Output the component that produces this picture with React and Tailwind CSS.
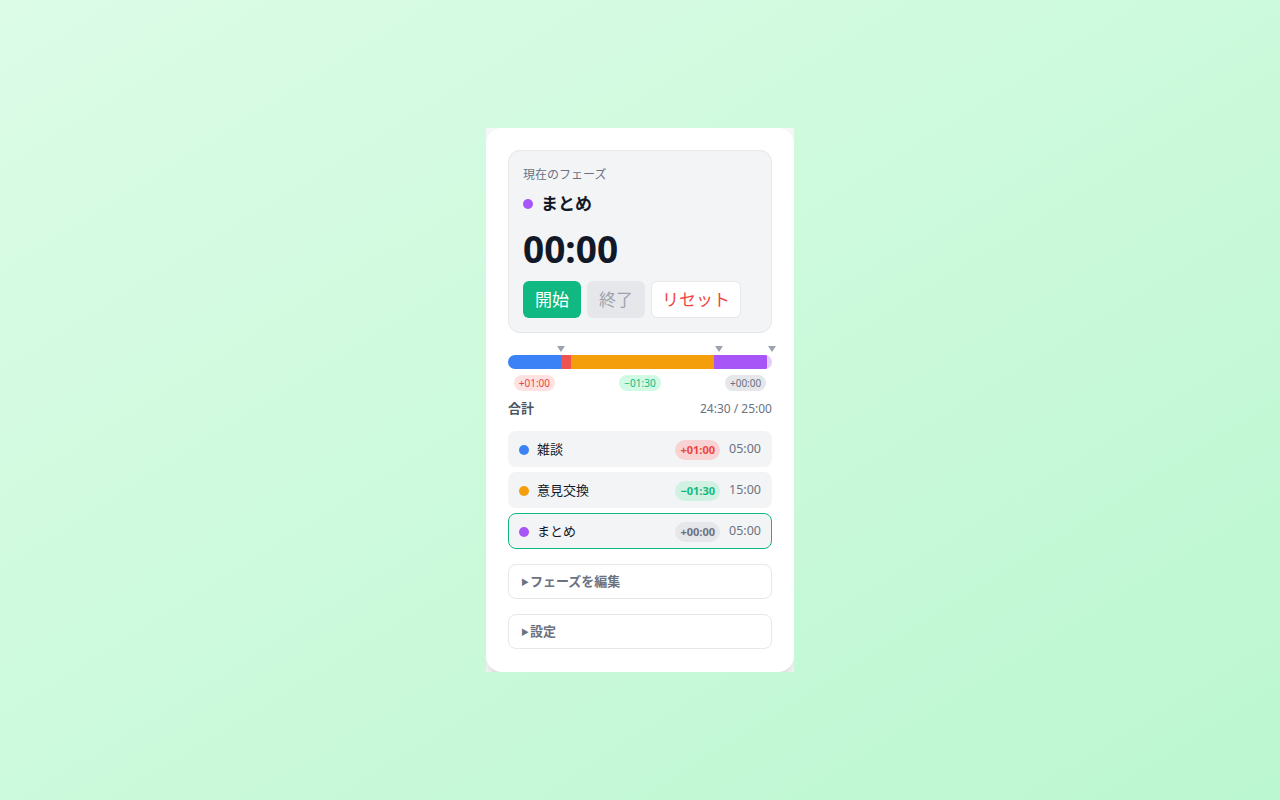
import React from 'react'

const font = { fontFamily: '"Noto Sans", "Noto Sans CJK JP", sans-serif' }

const phases = [
  { name: '雑談', dot: 'bg-[#3b82f6]', plan: 5, diff: '+01:00', tone: 'red', time: '05:00' },
  { name: '意見交換', dot: 'bg-[#f59e0b]', plan: 15, diff: '−01:30', tone: 'green', time: '15:00' },
  { name: 'まとめ', dot: 'bg-[#a855f7]', plan: 5, diff: '+00:00', tone: 'gray', time: '05:00', active: true },
]

const total = 25

// actual elapsed pieces on the bar, in minutes
const segments = [
  { m: 5, cls: 'bg-[#3b82f6]' },
  { m: 1, cls: 'bg-[#ef5350]' },
  { m: 13.5, cls: 'bg-[#f59e0b]' },
  { m: 5, cls: 'bg-[#a855f7]' },
  { m: 0.5, cls: 'bg-[#e2d0fb]' },
]

const smallPill = {
  red: 'bg-[#fee2e2] text-[#ef4444]',
  green: 'bg-[#d1fae5] text-[#10b981]',
  gray: 'bg-[#e5e7eb] text-[#6b7280]',
}

const rowPill = {
  red: 'bg-[#f9d3d3] text-[#ef4444]',
  green: 'bg-[#d1f2e3] text-[#10b981]',
  gray: 'bg-[#e5e7eb] text-[#6b7280]',
}

function Marker({ left }) {
  return (
    <div
      className="absolute top-[-9px] -translate-x-1/2 w-0 h-0 border-l-[4px] border-r-[4px] border-t-[6px] border-l-transparent border-r-transparent border-t-[#9ca3af]"
      style={{ left }}
    />
  )
}

export default function App() {
  let acc = 0
  const markers = phases.map(p => {
    acc += p.plan
    return `${(acc / total) * 100}%`
  })

  return (
    <div className="min-h-screen flex items-center justify-center bg-gradient-to-br from-[#dcfce7] to-[#bbf7d0]" style={font}>
      <div className="w-[308px] bg-[#f7f7f7] overflow-hidden">
        <div className="bg-white rounded-2xl shadow-lg pt-[22px] px-[22px] pb-[23px]">
          {/* current phase */}
          <div className="bg-[#f3f4f6] border border-[#e5e7eb] rounded-xl px-[14px] pt-[16px] pb-[14px]">
            <div className="text-xs leading-4 text-[#6b7280]">現在のフェーズ</div>
            <div className="mt-[9px] flex items-center gap-[8px] h-6">
              <span className="w-2.5 h-2.5 rounded-full bg-[#a855f7]" />
              <span className="text-[17px] font-bold text-[#111827]">まとめ</span>
            </div>
            <div className="mt-[11px] text-[37px] leading-[44px] font-bold text-[#111827]">00:00</div>
            <div className="mt-[10px] flex gap-[6px]">
              <button className="h-[37px] w-[58px] rounded-md bg-[#10b981] text-white text-[17px]">開始</button>
              <button className="h-[37px] w-[58px] rounded-md bg-[#e5e7eb] text-[#9ca3af] text-[17px]">終了</button>
              <button className="h-[37px] w-[90px] rounded-md bg-white border border-[#e5e7eb] text-[#ef4444] text-[17px]">リセット</button>
            </div>
          </div>

          {/* timeline */}
          <div className="relative mt-[22px]">
            {markers.map((l, i) => <Marker key={i} left={l} />)}
            <div className="flex h-[14px] rounded-full overflow-hidden">
              {segments.map((s, i) => (
                <div key={i} className={s.cls} style={{ width: `${(s.m / total) * 100}%` }} />
              ))}
            </div>
          </div>
          <div className="flex mt-[6px]">
            {phases.map((p, i) => (
              <div key={i} className="flex justify-center" style={{ width: `${(p.plan / total) * 100}%` }}>
                <span className={`h-4 leading-4 px-[5px] rounded-full text-[10px] ${smallPill[p.tone]}`}>{p.diff}</span>
              </div>
            ))}
          </div>

          <div className="mt-[7px] h-5 flex items-center justify-between pt-[1px]">
            <span className="text-[13px] font-semibold text-[#4b5563]">合計</span>
            <span className="text-xs text-[#6b7280]">24:30 / 25:00</span>
          </div>

          {/* phase list */}
          <div className="mt-[13px] flex flex-col gap-[5px]">
            {phases.map((p, i) => (
              <div
                key={i}
                className={`h-9 flex items-center rounded-lg bg-[#f3f4f6] border pl-[10px] pr-[10px] pt-[1px] ${p.active ? 'border-[#10b981]' : 'border-transparent'}`}
              >
                <span className={`w-2.5 h-2.5 rounded-full ${p.dot}`} />
                <span className="ml-[8px] text-[13px] text-[#111827]">{p.name}</span>
                <span className={`ml-auto h-5 leading-5 px-[5px] rounded-full text-[11px] font-bold ${rowPill[p.tone]}`}>{p.diff}</span>
                <span className="ml-[9px] text-[12.5px] text-[#6b7280]">{p.time}</span>
              </div>
            ))}
          </div>

          {/* collapsibles */}
          <div className="mt-[15px] h-[35px] flex items-center border border-[#e5e7eb] rounded-lg pl-3 pt-[1px] text-[13px] font-bold text-[#6b7280]">
            <span className="text-[8px] mr-[1px]">▶</span>フェーズを編集
          </div>
          <div className="mt-[15px] h-[35px] flex items-center border border-[#e5e7eb] rounded-lg pl-3 pt-[1px] text-[13px] font-bold text-[#6b7280]">
            <span className="text-[8px] mr-[1px]">▶</span>設定
          </div>
        </div>
      </div>
    </div>
  )
}
